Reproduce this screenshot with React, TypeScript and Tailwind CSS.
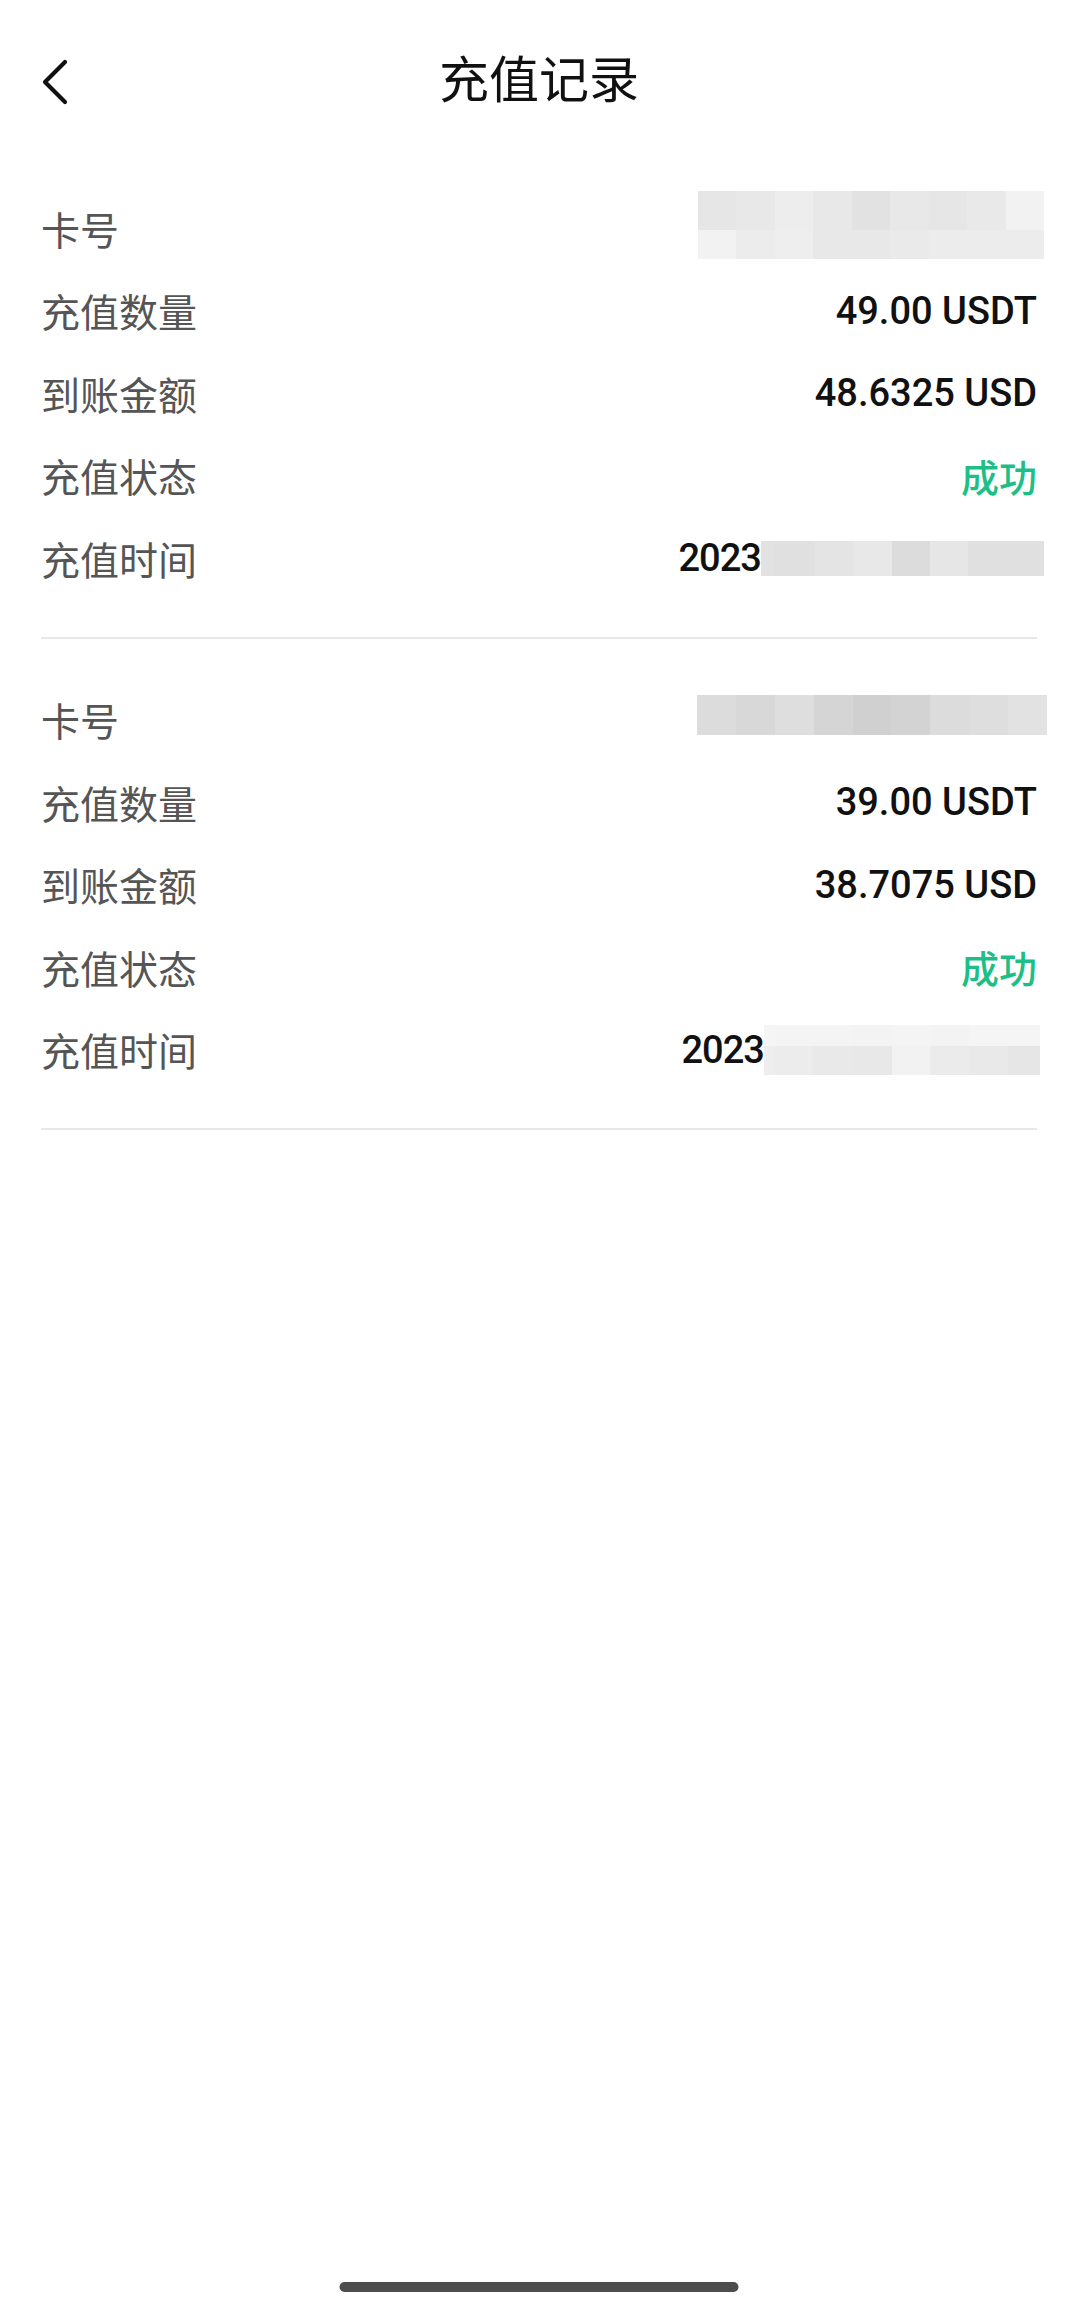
import React from "react";

type Cell = { w: number; c: string };

const Mosaic = ({ rows, className }: { rows: { h: number; cells: Cell[] }[]; className?: string }) => (
  <div className={"flex flex-col " + (className ?? "")}>
    {rows.map((r, i) => (
      <div key={i} className="flex" style={{ height: r.h }}>
        {r.cells.map((c, j) => (
          <div key={j} style={{ width: c.w, background: c.c }} />
        ))}
      </div>
    ))}
  </div>
);

const cols = (w: number, colors: string[]) => colors.map((c) => ({ w, c }));
const seq = (ws: number[], colors: string[]) => ws.map((w, i) => ({ w, c: colors[i] }));

const card1 = [
  { h: 39, cells: cols(38.5, ["#e6e6e6", "#e8e8e8", "#ededed", "#e8e8e8", "#e2e2e2", "#e8e8e8", "#e6e6e6", "#e9e9e9", "#f2f2f2"]) },
  { h: 29, cells: cols(38.5, ["#f2f2f2", "#ececec", "#eeeeee", "#e8e8e8", "#e8e8e8", "#eaeaea", "#ececec", "#ececec", "#ececec"]) },
];
const time1 = [
  { h: 35, cells: seq([14, 40, 38, 39, 38, 38, 39, 37], ["#e2e2e2", "#e0e0e0", "#e4e4e4", "#e8e8e8", "#dcdcdc", "#e6e6e6", "#e0e0e0", "#e0e0e0"]) },
];
const card2 = [
  { h: 40, cells: cols(38.9, ["#dcdcdc", "#d8d8d8", "#dedede", "#d5d5d5", "#d0d0d0", "#d3d3d3", "#dcdcdc", "#dedede", "#e2e2e2"]) },
];
const time2 = [
  { h: 21, cells: seq([11, 38, 40, 39, 38, 39, 39, 32], ["#f5f5f5", "#f4f4f4", "#f4f4f4", "#f3f3f3", "#f4f4f4", "#f3f3f3", "#f5f5f5", "#f5f5f5"]) },
  { h: 29, cells: seq([11, 38, 40, 39, 38, 39, 39, 32], ["#eeeeee", "#ececec", "#e9e9e9", "#e8e8e8", "#f2f2f2", "#ebebeb", "#e9e9e9", "#e6e6e6"]) },
];

const labelCls = "text-[39px] leading-none text-[#555555]";
const valueCls = "text-[38px] leading-none font-medium text-[#111111]";
const font = { fontFamily: "Roboto, 'Noto Sans CJK SC', sans-serif" };

const Row = ({ label, children }: { label: string; children: React.ReactNode }) => (
  <div className="flex h-[82.5px] items-center justify-between">
    <span className={labelCls} style={{ fontFamily: "'Noto Sans CJK SC', sans-serif" }}>
      {label}
    </span>
    {children}
  </div>
);

const Record = ({
  amount,
  received,
  card,
  time,
  cardMr,
  timeMr,
  cardOffset,
}: {
  amount: string;
  received: string;
  card: { h: number; cells: Cell[] }[];
  time: { h: number; cells: Cell[] }[];
  cardMr: string;
  timeMr: string;
  cardOffset: string;
}) => (
  <div className="border-b-2 border-[#e8e8e8] pb-[37px] pt-[40px]">
    <Row label="卡号">
      <Mosaic rows={card} className={cardMr + " " + cardOffset} />
    </Row>
    <Row label="充值数量">
      <span className={valueCls} style={font}>{amount}</span>
    </Row>
    <Row label="到账金额">
      <span className={valueCls} style={font}>{received}</span>
    </Row>
    <Row label="充值状态">
      <span
        className="text-[38px] leading-none font-medium text-[#1dbf86]"
        style={{ fontFamily: "'Noto Sans CJK SC', sans-serif" }}
      >
        成功
      </span>
    </Row>
    <Row label="充值时间">
      <div className={"flex items-center " + timeMr}>
        <span className={valueCls + " tracking-tight"} style={font}>2023</span>
        <Mosaic rows={time} />
      </div>
    </Row>
  </div>
);

export default function App() {
  return (
    <div className="relative min-h-[2308px] w-full bg-white">
      <header className="relative flex h-[147px] items-start justify-center pt-[51px]">
        <svg
          className="absolute left-[41px] top-[59px]"
          width="28"
          height="46"
          viewBox="0 0 28 46"
          fill="none"
          stroke="#111"
          strokeWidth="4.2"
          strokeLinecap="round"
          strokeLinejoin="round"
        >
          <polyline points="24,3 4,23 24,43" />
        </svg>
        <h1
          className="text-[50px] leading-[50px] font-normal text-[#111111]"
          style={{ fontFamily: "'Noto Sans CJK SC', sans-serif" }}
        >
          充值记录
        </h1>
      </header>
      <main className="px-[41px]">
        <Record
          amount="49.00 USDT"
          received="48.6325 USD"
          card={card1}
          time={time1}
          cardMr="-mr-[7px]"
          timeMr="-mr-[7px]"
          cardOffset="-translate-y-[3px]"
        />
        <Record
          amount="39.00 USDT"
          received="38.7075 USD"
          card={card2}
          time={time2}
          cardMr="-mr-[10px]"
          timeMr="-mr-[3px]"
          cardOffset="-translate-y-[5px]"
        />
      </main>
      <div className="absolute bottom-[16px] left-1/2 h-[10px] w-[399px] -translate-x-1/2 rounded-full bg-[#4d4d4d]" />
    </div>
  );
}
